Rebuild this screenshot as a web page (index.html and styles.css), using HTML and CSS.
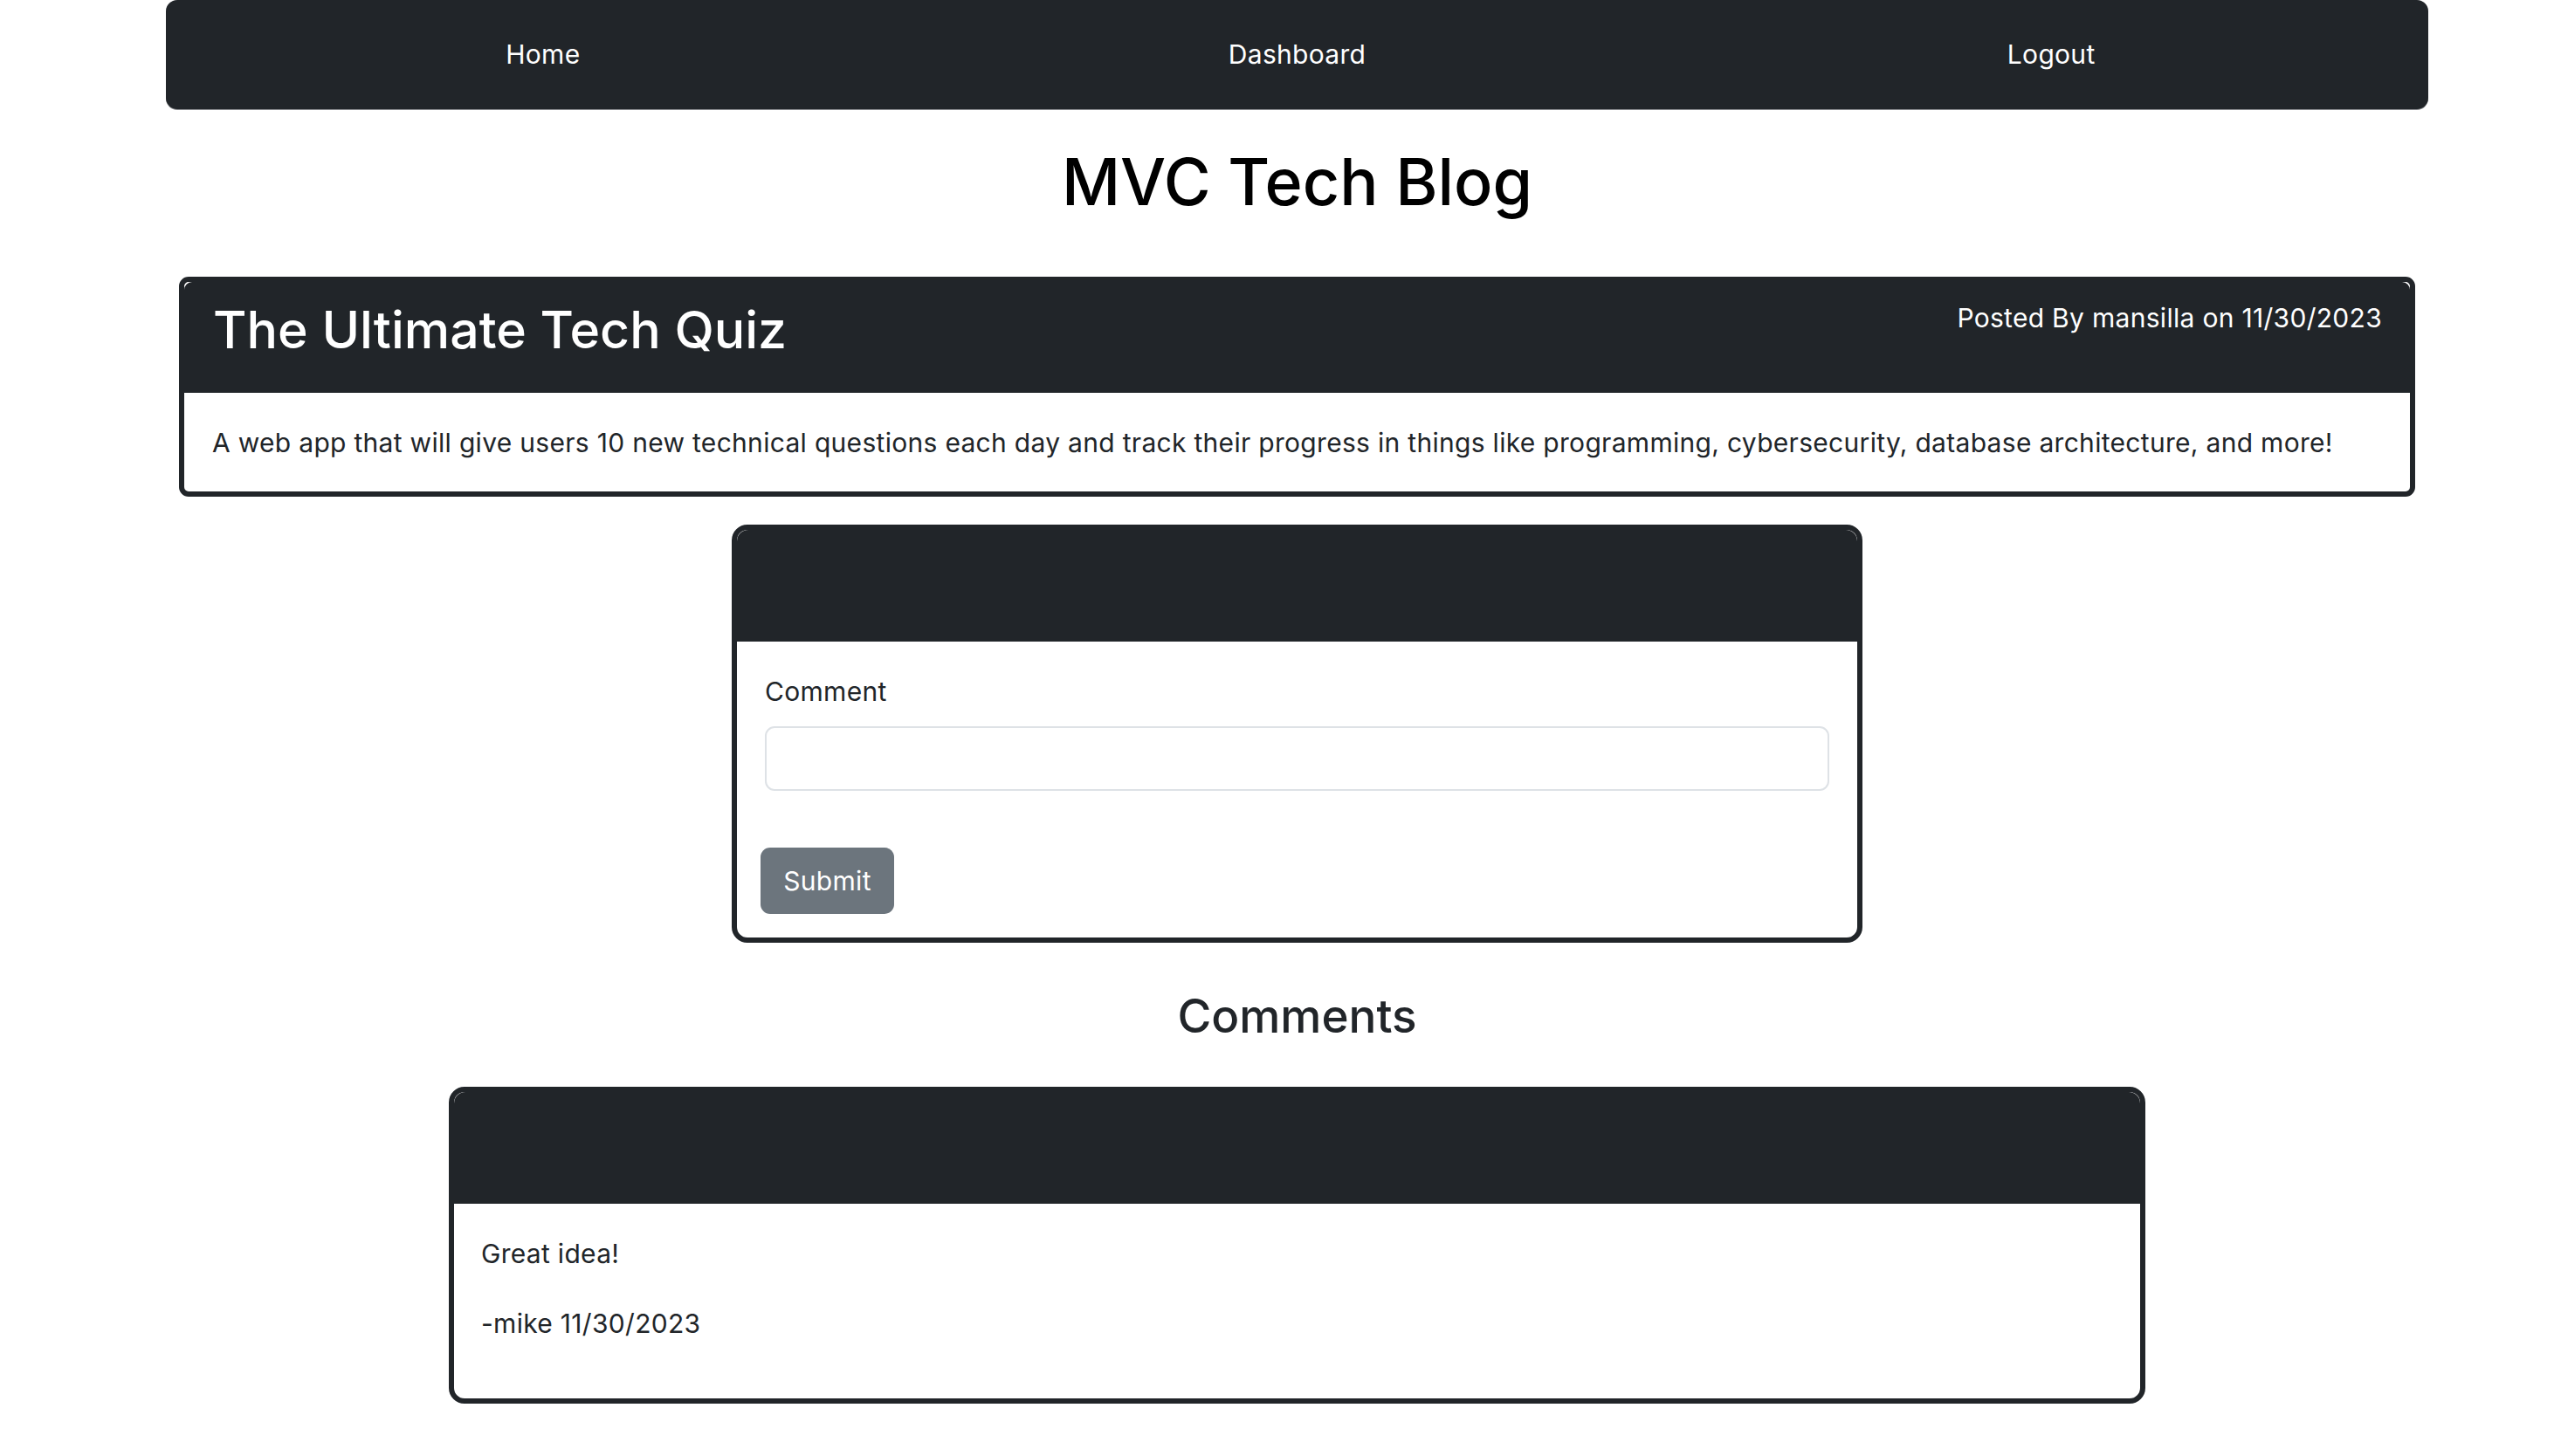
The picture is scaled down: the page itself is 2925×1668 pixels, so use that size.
FILE: index.html
```html
<!DOCTYPE html>
<html lang="en">
<head>
<meta charset="utf-8">
<title>MVC Tech Blog</title>
<link rel="stylesheet" href="styles.css">
</head>
<body>
<div class="page">
  <nav class="topnav">
    <a class="nav-link" href="#">Home</a>
    <a class="nav-link" href="#">Dashboard</a>
    <a class="nav-link" href="#">Logout</a>
  </nav>

  <h1 class="site-title">MVC Tech Blog</h1>

  <section class="card post-card">
    <div class="card-header post-header">
      <h2 class="post-title">The Ultimate Tech Quiz</h2>
      <p class="post-meta">Posted By mansilla on 11/30/2023</p>
    </div>
    <div class="post-body">
      <p>A web app that will give users 10 new technical questions each day and track their progress in things like programming, cybersecurity, database architecture, and more!</p>
    </div>
  </section>

  <section class="card form-card">
    <div class="card-header plain-header"></div>
    <form class="form-body">
      <label class="form-label" for="comment">Comment</label>
      <input class="form-control" id="comment" type="text">
      <button class="btn-submit" type="button">Submit</button>
    </form>
  </section>

  <h3 class="comments-title">Comments</h3>

  <section class="card comment-card">
    <div class="card-header plain-header"></div>
    <div class="comment-body">
      <p class="comment-text">Great idea!</p>
      <p class="comment-meta">-mike 11/30/2023</p>
    </div>
  </section>
</div>
</body>
</html>
```

FILE: styles.css
```css
html, body {
  margin: 0;
  padding: 0;
  background: #ffffff;
}

body {
  font-family: Inter, "Liberation Sans", sans-serif;
  font-size: 30px;
  line-height: 1.5;
  letter-spacing: 0.3px;
  color: #212529;
}

.page {
  width: 2591px;
  margin-left: 190px;
  display: flex;
  flex-direction: column;
}

.topnav {
  display: flex;
  align-items: center;
  height: 125px;
  background: #212529;
  border-radius: 13px;
  box-shadow: 0 1px 0 rgba(33, 37, 41, 0.55);
}

.nav-link {
  flex: 1;
  text-align: center;
  color: #ffffff;
  text-decoration: none;
  font-size: 30px;
  line-height: 45px;
}

.site-title {
  margin: 39px 0 64px;
  text-align: center;
  font-size: 73.6px;
  line-height: 89px;
  font-weight: 500;
  letter-spacing: 0;
  color: #000000;
}

.card {
  background: #ffffff;
  border: 6px solid #212529;
  border-radius: 11px;
  box-sizing: border-box;
}

.card-header {
  background: #212529;
  border-radius: 9px 9px 0 0;
}

.post-card {
  margin: 0 15px;
}

.post-header {
  display: flex;
  justify-content: space-between;
  align-items: flex-start;
  padding: 19px 32px 36px 33px;
  height: 127px;
  box-sizing: border-box;
}

.post-title {
  margin: 0;
  font-size: 59px;
  line-height: 72px;
  font-weight: 500;
  letter-spacing: 0;
  color: #ffffff;
}

.post-meta {
  margin: 0;
  font-size: 30px;
  line-height: 45px;
  color: #ffffff;
}

.post-body {
  padding: 35px 32px 33px;
}

.post-body p {
  margin: 0;
  line-height: 45px;
}

.form-card {
  width: 1295px;
  margin: 32px auto 0;
  border-radius: 18px;
}

.plain-header {
  height: 128px;
  border-radius: 13px 13px 0 0;
}

.form-body {
  display: flex;
  flex-direction: column;
  align-items: flex-start;
  padding: 35px 32px 27px;
}

.form-label {
  font-size: 30px;
  line-height: 45px;
  margin-bottom: 17px;
}

.form-control {
  width: 100%;
  height: 74px;
  box-sizing: border-box;
  border: 2px solid #dee2e6;
  border-radius: 11px;
  font-family: inherit;
  font-size: 30px;
  padding: 0 22px;
  margin: 0;
  outline: none;
}

.btn-submit {
  margin: 65px 0 0 -5px;
  width: 153px;
  height: 76px;
  border: none;
  border-radius: 11px;
  background: #6c757d;
  color: #ffffff;
  font-family: inherit;
  font-size: 30px;
  line-height: 45px;
  letter-spacing: 0.3px;
  padding: 0;
}

.comments-title {
  margin: 53px 0 48px;
  text-align: center;
  font-size: 53px;
  line-height: 1.2;
  font-weight: 500;
  letter-spacing: 0;
  color: #212529;
}

.comment-card {
  width: 1943px;
  margin: 0 auto;
  border-radius: 18px;
}

.comment-body {
  padding: 35px 31px 63px;
}

.comment-text {
  margin: 0 0 35px;
  line-height: 45px;
}

.comment-meta {
  margin: 0;
  line-height: 45px;
}
```
